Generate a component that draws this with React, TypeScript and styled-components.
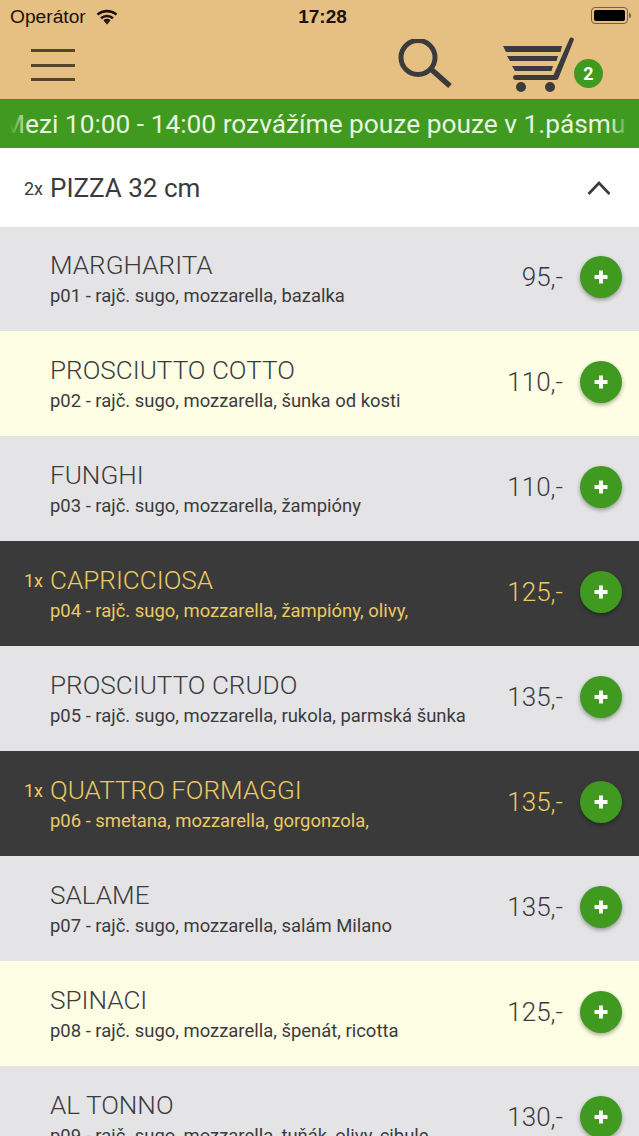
import { FC } from 'react';
import styled, { createGlobalStyle } from 'styled-components';

type IPizza = {
    name: string;
    desc: string;
    price: string;
    count?: number;
    tone: 'grey' | 'cream' | 'dark';
};

const pizzas: IPizza[] = [
    { name: 'MARGHARITA', desc: 'p01 - rajč. sugo, mozzarella, bazalka', price: '95,-', tone: 'grey' },
    { name: 'PROSCIUTTO COTTO', desc: 'p02 - rajč. sugo, mozzarella, šunka od kosti', price: '110,-', tone: 'cream' },
    { name: 'FUNGHI', desc: 'p03 - rajč. sugo, mozzarella, žampióny', price: '110,-', tone: 'grey' },
    { name: 'CAPRICCIOSA', desc: 'p04 - rajč. sugo, mozzarella, žampióny, olivy,', price: '125,-', count: 1, tone: 'dark' },
    { name: 'PROSCIUTTO CRUDO', desc: 'p05 - rajč. sugo, mozzarella, rukola, parmská šunka', price: '135,-', tone: 'grey' },
    { name: 'QUATTRO FORMAGGI', desc: 'p06 - smetana, mozzarella, gorgonzola,', price: '135,-', count: 1, tone: 'dark' },
    { name: 'SALAME', desc: 'p07 - rajč. sugo, mozzarella, salám Milano', price: '135,-', tone: 'grey' },
    { name: 'SPINACI', desc: 'p08 - rajč. sugo, mozzarella, špenát, ricotta', price: '125,-', tone: 'cream' },
    { name: 'AL TONNO', desc: 'p09 - rajč. sugo, mozzarella, tuňák, olivy, cibule', price: '130,-', tone: 'grey' },
];

const rowBackgrounds = { grey: '#e4e4e6', cream: '#fefee4', dark: '#3a3a3a' };

const GlobalStyle = createGlobalStyle`
    html, body {
        margin: 0;
        padding: 0;
        background: #fff;
    }
    body {
        font-family: Roboto, "Liberation Sans", sans-serif;
    }
`;

const Page = styled.div`
    width: 639px;
    height: 1136px;
    overflow: hidden;
`;

const TopArea = styled.header`
    background: #e6bf83;
    height: 99px;
    display: flex;
    flex-direction: column;
`;

const StatusBar = styled.div`
    height: 33px;
    display: grid;
    grid-template-columns: 1fr auto 1fr;
    align-items: center;
    padding: 0 10px;
    color: #1c120a;
    font-family: "Liberation Sans", sans-serif;
    font-size: 19.2px;
`;

const StatusLeft = styled.div`
    display: flex;
    align-items: center;
    gap: 10px;
`;

const Clock = styled.div`
    font-weight: 700;
    font-size: 19px;
    color: #1c120a;
    margin-left: 6px;
`;

const Battery = styled.div`
    justify-self: end;
    width: 37px;
    height: 17px;
    margin-right: 1px;
    margin-top: -2px;
    box-sizing: border-box;
    border: 1px solid #7a5f3a;
    border-radius: 4px;
    padding: 2px;
    position: relative;

    &::before {
        content: '';
        display: block;
        height: 100%;
        background: #000;
        border-radius: 2px;
    }

    &::after {
        content: '';
        position: absolute;
        right: -4px;
        top: 5px;
        width: 2px;
        height: 5px;
        background: #7a5f3a;
        border-radius: 0 2px 2px 0;
    }
`;

const Toolbar = styled.div`
    flex: 1;
    display: flex;
    align-items: flex-start;
    padding-left: 31px;
`;

const MenuButton = styled.div`
    width: 44px;
    margin-top: 16px;
    display: flex;
    flex-direction: column;
    gap: 11.5px;
`;

const MenuLine = styled.span`
    display: block;
    height: 3px;
    background: #54452f;
`;

const SearchButton = styled.div`
    margin-left: 322px;
    margin-top: 6px;
    height: 52px;
`;

const CartButton = styled.div`
    margin-left: 50px;
    margin-top: 4px;
    height: 56px;
`;

const CartBadge = styled.div`
    width: 29px;
    height: 29px;
    margin-top: 26px;
    margin-left: -2px;
    border-radius: 50%;
    background: #3f9a1f;
    color: #fff;
    font-size: 18px;
    font-weight: 700;
    display: flex;
    align-items: center;
    justify-content: center;
`;

const Ticker = styled.div`
    height: 49px;
    background: #3f9a1f;
    border-top: 1px solid #3a8c1d;
    box-sizing: border-box;
    overflow: hidden;
    position: relative;
    white-space: nowrap;
    color: #e8f5e0;
    font-size: 26.3px;
    line-height: 48px;

    &::before, &::after {
        content: '';
        position: absolute;
        top: 0;
        bottom: 0;
        width: 30px;
        z-index: 1;
    }

    &::before {
        left: 0;
        background: linear-gradient(to right, #3f9a1f 30%, rgba(63, 154, 31, 0));
    }

    &::after {
        right: 0;
        background: linear-gradient(to left, #3f9a1f 30%, rgba(63, 154, 31, 0));
    }
`;

const TickerText = styled.span`
    display: inline-block;
    margin-left: 2px;
`;

const SectionHeader = styled.div`
    height: 79px;
    background: #fff;
    display: flex;
    align-items: center;
    padding: 0 28px 0 24px;
    color: #3b3b3d;
    position: relative;
    z-index: 1;
`;

const SectionCount = styled.span`
    font-size: 18px;
    width: 26px;
    margin-top: 1px;
`;

const SectionTitle = styled.span`
    flex: 1;
    font-size: 26px;
`;

const RowList = styled.div`
    margin-top: -1px;
`;

const Row = styled.div<{ $tone: IPizza['tone'] }>`
    height: 105px;
    box-sizing: border-box;
    background: ${p => rowBackgrounds[p.$tone]};
    color: ${p => (p.$tone === 'dark' ? '#ecca62' : '#3b3b3d')};
    display: flex;
    align-items: center;
    padding: 0 17px 0 24px;
`;

const RowCount = styled.div`
    width: 26px;
    font-size: 18px;
    margin-top: -27px;
`;

const RowText = styled.div`
    flex: 1;
    min-width: 0;
    display: flex;
    flex-direction: column;
    margin-top: 1px;
`;

const RowName = styled.div`
    font-size: 26.1px;
    font-weight: 300;
    line-height: 32px;
`;

const RowDesc = styled.div`
    font-size: 18.45px;
    line-height: 27px;
    margin-top: 2px;
    white-space: nowrap;
`;

const RowPrice = styled.div`
    font-size: 26px;
    font-weight: 300;
    margin-right: 17px;
    margin-top: -3px;
`;

const AddButton = styled.div`
    width: 42px;
    height: 42px;
    border-radius: 50%;
    background: #3f9a1f;
    box-shadow: 0 2px 4px rgba(0, 0, 0, 0.35);
    display: flex;
    align-items: center;
    justify-content: center;
    margin-top: -3px;
`;

const WifiIcon: FC = () => (
    <svg width="22" height="16" viewBox="0 0 22 16" fill="none" stroke="#1c120a" strokeWidth="2.6">
        <path d="M1.5 5.6C6.8 .9 15.2 .9 20.5 5.6" />
        <path d="M5 9.2c3.4-3 8.6-3 12 0" />
        <path d="M8.2 12.2c1.6-1.2 4-1.2 5.6 0" />
        <path d="M11 15.6l-2.2-2.6c1.3-.8 3.1-.8 4.4 0z" fill="#1c120a" stroke="none" />
    </svg>
);

const SearchIcon: FC = () => (
    <svg width="56" height="52" viewBox="0 0 56 52" fill="none" stroke="#3b3b3d" strokeWidth="5">
        <circle cx="21" cy="18.5" r="17" />
        <path d="M35 31l18 16" strokeWidth="5.5" />
    </svg>
);

const CartIcon: FC = () => (
    <svg width="73" height="56" viewBox="0 0 73 56" fill="#3b3b3d">
        <path d="M0 9h59l-1.500 6H3z" />
        <path d="M4 19h51l-1.500 5H7z" />
        <path d="M9 29h41l-1.500 5H12z" />
        <path d="M66.500 2c1-2.500 5-1.500 4.200 1.200L55.500 41c-.5 1.200-1.500 2-3 2H12.500c-3.200 0-3.200-5 0-5H50.500z" />
        <circle cx="18" cy="50" r="5" />
        <circle cx="47" cy="50" r="5" />
    </svg>
);

const ChevronIcon: FC = () => (
    <svg width="24" height="14" viewBox="0 0 24 14" fill="none" stroke="#3b3b3d" strokeWidth="2.600">
        <path d="M1.500 13L12 2l10.500 11" />
    </svg>
);

const PlusIcon: FC = () => (
    <svg width="14" height="14" viewBox="0 0 14 14" fill="#fff">
        <path d="M5 0.500h4V5h4.500v4H9v4.500H5V9H0.500V5H5z" />
    </svg>
);

const App: FC = () => {
    return <>
        <GlobalStyle />
        <Page>
            <TopArea>
                <StatusBar>
                    <StatusLeft>Operátor <WifiIcon /></StatusLeft>
                    <Clock>17:28</Clock>
                    <Battery />
                </StatusBar>
                <Toolbar>
                    <MenuButton>
                        <MenuLine />
                        <MenuLine />
                        <MenuLine />
                    </MenuButton>
                    <SearchButton><SearchIcon /></SearchButton>
                    <CartButton><CartIcon /></CartButton>
                    <CartBadge>2</CartBadge>
                </Toolbar>
            </TopArea>
            <Ticker>
                <TickerText>Mezi 10:00 - 14:00 rozvážíme pouze pouze v 1.pásmu</TickerText>
            </Ticker>
            <SectionHeader>
                <SectionCount>2x</SectionCount>
                <SectionTitle>PIZZA 32 cm</SectionTitle>
                <ChevronIcon />
            </SectionHeader>
            <RowList>
                {pizzas.map(pizza =>
                    <Row key={pizza.name} $tone={pizza.tone}>
                        <RowCount>{pizza.count ? `${pizza.count}x` : ''}</RowCount>
                        <RowText>
                            <RowName>{pizza.name}</RowName>
                            <RowDesc>{pizza.desc}</RowDesc>
                        </RowText>
                        <RowPrice>{pizza.price}</RowPrice>
                        <AddButton><PlusIcon /></AddButton>
                    </Row>
                )}
            </RowList>
        </Page>
    </>;
};

export default App;
